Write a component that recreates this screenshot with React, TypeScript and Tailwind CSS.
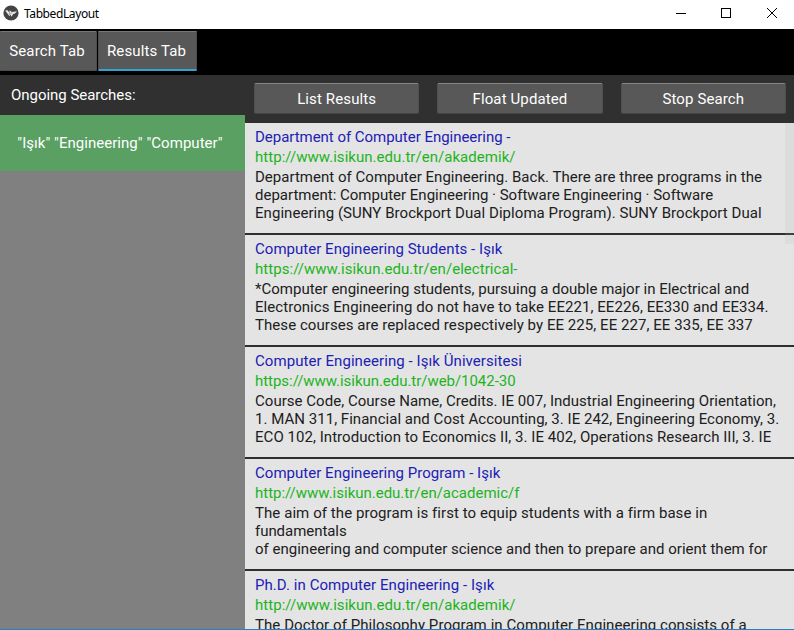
type Line = { text: string; track: string };
type Result = { title: Line; url: Line; body: Line[] };

const results: Result[] = [
  {
    title: { text: "Department of Computer Engineering -", track: "tracking-[-0.03px]" },
    url: { text: "http://www.isikun.edu.tr/en/akademik/", track: "tracking-[0.04px]" },
    body: [
      { text: "Department of Computer Engineering. Back. There are three programs in the", track: "tracking-[0.02px]" },
      { text: "department: Computer Engineering · Software Engineering · Software", track: "tracking-[0px]" },
      { text: "Engineering (SUNY Brockport Dual Diploma Program). SUNY Brockport Dual", track: "tracking-[0.055px]" },
    ],
  },
  {
    title: { text: "Computer Engineering Students - Işık", track: "tracking-[0.03px]" },
    url: { text: "https://www.isikun.edu.tr/en/electrical-", track: "tracking-[0.045px]" },
    body: [
      { text: "*Computer engineering students, pursuing a double major in Electrical and", track: "tracking-[0.01px]" },
      { text: "Electronics Engineering do not have to take EE221, EE226, EE330 and EE334.", track: "tracking-[0.055px]" },
      { text: "These courses are replaced respectively by EE 225, EE 227, EE 335, EE 337", track: "tracking-[0.055px]" },
    ],
  },
  {
    title: { text: "Computer Engineering - Işık Üniversitesi", track: "tracking-[0.07px]" },
    url: { text: "https://www.isikun.edu.tr/web/1042-30", track: "tracking-[-0.04px]" },
    body: [
      { text: "Course Code, Course Name, Credits. IE 007, Industrial Engineering Orientation,", track: "tracking-[0.03px]" },
      { text: "1. MAN 311, Financial and Cost Accounting, 3. IE 242, Engineering Economy, 3.", track: "tracking-[0.03px]" },
      { text: "ECO 102, Introduction to Economics II, 3. IE 402, Operations Research III, 3. IE", track: "tracking-[0.045px]" },
    ],
  },
  {
    title: { text: "Computer Engineering Program - Işık", track: "tracking-[0.03px]" },
    url: { text: "http://www.isikun.edu.tr/en/academic/f", track: "tracking-[-0.01px]" },
    body: [
      { text: "The aim of the program is first to equip students with a firm base in", track: "tracking-[0.07px]" },
      { text: "fundamentals", track: "tracking-[-0.05px]" },
      { text: "of engineering and computer science and then to prepare and orient them for", track: "tracking-[0.01px]" },
    ],
  },
  {
    title: { text: "Ph.D. in Computer Engineering - Işık", track: "tracking-[0.06px]" },
    url: { text: "http://www.isikun.edu.tr/en/akademik/", track: "tracking-[0.04px]" },
    body: [{ text: "The Doctor of Philosophy Program in Computer Engineering consists of a", track: "tracking-[0.07px]" }],
  },
];

function ResultItem({ title, url, body }: Result) {
  return (
    <div className="h-28 shrink-0 overflow-hidden whitespace-nowrap border-b-2 border-[#302f2f] bg-[#e4e4e4] pl-2.5 pt-1 text-[#202020]">
      <div className={`h-5 leading-5 text-[#2020b5] ${title.track}`}>{title.text}</div>
      <div className={`h-5 leading-5 text-[#1cb41c] ${url.track}`}>{url.text}</div>
      <div className="pt-px">
        {body.map((l) => (
          <div key={l.text} className={`h-[18px] leading-[18px] ${l.track}`}>{l.text}</div>
        ))}
      </div>
    </div>
  );
}

function ToolButton({ label }: { label: string }) {
  return (
    <button className="flex h-[31px] flex-1 items-center justify-center rounded-[2px] border border-x-[#505050] border-b-[#444] border-t-[#858585] bg-[#585858] pt-0.5 tracking-[0.12px] text-white">
      {label}
    </button>
  );
}

export default function App() {
  return (
    <div className="flex h-[630px] w-[794px] flex-col overflow-hidden bg-black font-['Roboto','Noto_Sans',sans-serif] text-[15px] text-white">
      <header className="flex h-[29px] shrink-0 items-center bg-white text-black">
        <svg className="ml-[3px] mb-[3px]" width="16" height="16" viewBox="0 0 16 16">
          <circle cx="8" cy="8" r="7.6" fill="#424344" />
          <path d="M2.1 5.4l2.6-.2 1.8 2.7V5.3l2.4 1.8 5.2-.8-2.5 2.5-1.5.2-1.3 2.7-1.4-2-.9 1.5z" fill="#e6e6e6" />
          <path d="M6.6 7.7v2.4M8.8 7.3l-1.4 2" stroke="#777" strokeWidth=".6" />
        </svg>
        <span className="ml-[5px] mt-[-1px] font-['Noto_Sans',sans-serif] text-[12px] tracking-[-0.4px]">TabbedLayout</span>
        <svg className="ml-auto mb-[3px] mr-4" width="102" height="12" viewBox="0 0 102 12" fill="none" stroke="black" shapeRendering="crispEdges">
          <path d="M0 6.5h10M45.5 1.5h9v9h-9z" />
          <path d="M91 1l10 10M101 1L91 11" shapeRendering="auto" />
        </svg>
      </header>

      <nav className="flex h-[46px] shrink-0 gap-px pt-0.5 tracking-[0.14px]">
        <button className="h-10 w-[97px] rounded-[1px] border border-l-0 border-[#4c4c4c] border-t-[#777] bg-[#585858] pr-[2px]">Search Tab</button>
        <button className="h-10 w-[99px] rounded-[1px] border border-b-2 border-[#4c4c4c] border-b-[#32a4ce] border-t-[#777] bg-[#585858] pr-[2px] pt-px">Results Tab</button>
      </nav>

      <main className="flex h-[554px] shrink-0 bg-[#303030]">
        <aside className="flex w-[245px] shrink-0 flex-col">
          <div className="h-10 pl-[11px] leading-10 tracking-[-0.03px]">Ongoing Searches:</div>
          <div className="flex h-14 shrink-0 items-center justify-center bg-[#5aa062] pr-[5px] tracking-[0.04px]">"Işık" "Engineering" "Computer"</div>
          <div className="flex-1 bg-[#808080]" />
        </aside>
        <section className="flex min-w-0 flex-1 flex-col">
          <div className="flex h-12 shrink-0 gap-[18px] pl-[9px] pr-2 pt-2">
            <ToolButton label="List Results" />
            <ToolButton label="Float Updated" />
            <ToolButton label="Stop Search" />
          </div>
          <div className="relative flex min-h-0 flex-1 flex-col overflow-hidden">
            {results.map((r) => (
              <ResultItem key={r.title.text} {...r} />
            ))}
            <div className="absolute right-0 top-0 h-[121px] w-[9px] bg-[#b0b0b0]/15" />
          </div>
        </section>
      </main>
      <div className="h-px shrink-0 bg-[#2781bd]" />
    </div>
  );
}
